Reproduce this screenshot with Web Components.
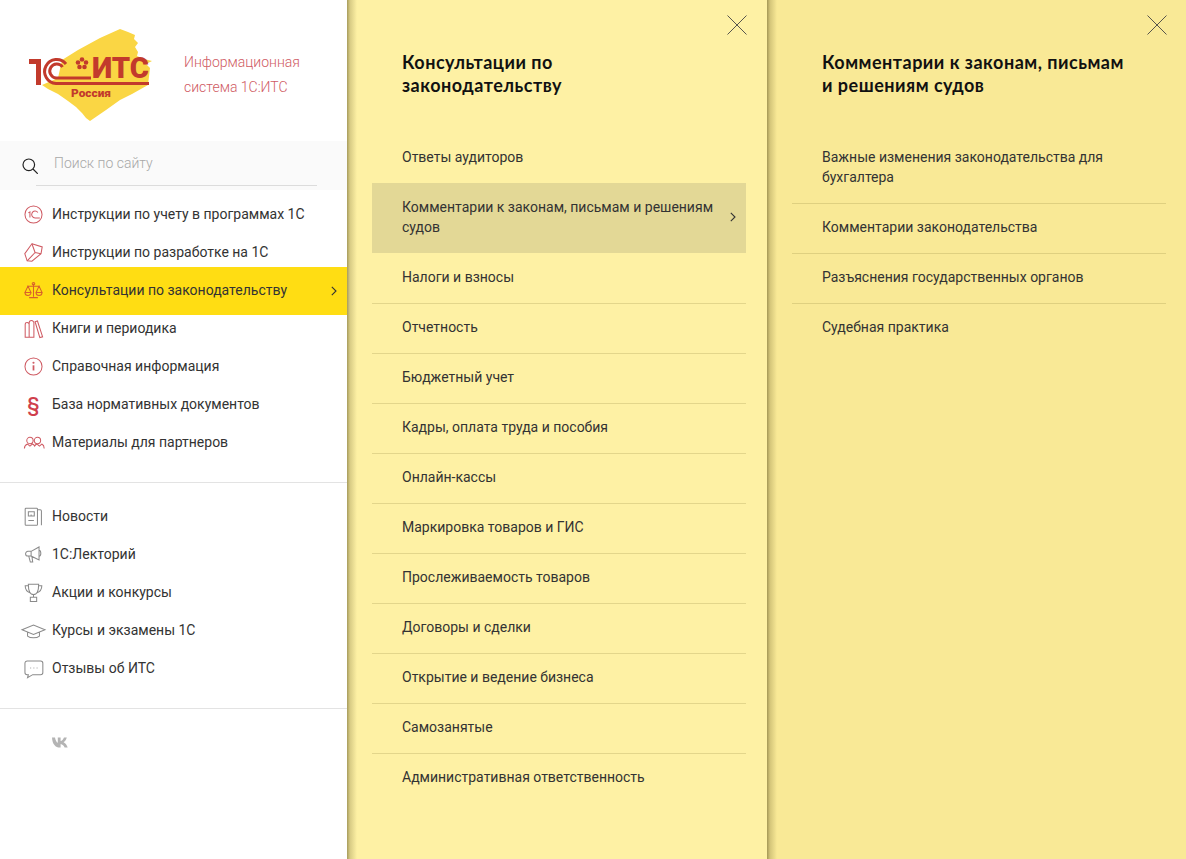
<!DOCTYPE html>
<html lang="ru">
<head>
<meta charset="utf-8">
<title>1С:ИТС</title>
<style>
  html, body { margin: 0; height: 100%; overflow: hidden; background: #fff; }
  body { font-family: Roboto, "Liberation Sans", sans-serif; font-size: 14px; color: #333; }
</style>
</head>
<body>

<its-app>
  <its-sidebar>
    <its-logo slot="logo">Информационная система 1С:ИТС</its-logo>
    <its-search slot="search" placeholder="Поиск по сайту"></its-search>
    <its-nav-group slot="main" tone="red">
      <its-nav-item icon="onec">Инструкции по учету в программах 1С</its-nav-item>
      <its-nav-item icon="cube">Инструкции по разработке на 1С</its-nav-item>
      <its-nav-item icon="scales" active>Консультации по законодательству</its-nav-item>
      <its-nav-item icon="books">Книги и периодика</its-nav-item>
      <its-nav-item icon="info">Справочная информация</its-nav-item>
      <its-nav-item icon="para">База нормативных документов</its-nav-item>
      <its-nav-item icon="people">Материалы для партнеров</its-nav-item>
    </its-nav-group>
    <its-nav-group slot="extra" tone="grey">
      <its-nav-item icon="news">Новости</its-nav-item>
      <its-nav-item icon="horn">1С:Лекторий</its-nav-item>
      <its-nav-item icon="cup">Акции и конкурсы</its-nav-item>
      <its-nav-item icon="cap">Курсы и экзамены 1С</its-nav-item>
      <its-nav-item icon="chat">Отзывы об ИТС</its-nav-item>
    </its-nav-group>
  </its-sidebar>

  <its-panel style="--panel-bg:#fef1a4">
    <h2 slot="heading">Консультации по<br>законодательству</h2>
    <its-link>Ответы аудиторов</its-link>
    <its-link active>Комментарии к законам, письмам и решениям судов</its-link>
    <its-link>Налоги и взносы</its-link>
    <its-link>Отчетность</its-link>
    <its-link>Бюджетный учет</its-link>
    <its-link>Кадры, оплата труда и пособия</its-link>
    <its-link>Онлайн-кассы</its-link>
    <its-link>Маркировка товаров и ГИС</its-link>
    <its-link>Прослеживаемость товаров</its-link>
    <its-link>Договоры и сделки</its-link>
    <its-link>Открытие и ведение бизнеса</its-link>
    <its-link>Самозанятые</its-link>
    <its-link>Административная ответственность</its-link>
  </its-panel>

  <its-panel style="--panel-bg:#f9e996">
    <h2 slot="heading">Комментарии к законам, письмам<br>и решениям судов</h2>
    <its-link>Важные изменения законодательства для бухгалтера</its-link>
    <its-link>Комментарии законодательства</its-link>
    <its-link>Разъяснения государственных органов</its-link>
    <its-link>Судебная практика</its-link>
  </its-panel>
</its-app>

<script>
// line icons for the sidebar, all on a 24x24 box
const ICONS = {
  onec: `<circle cx="12" cy="12" r="10.8"/><path d="M5.5 10l2-1.300v7M17.500 9.500A4.300 4.300 0 1 0 14 16.300H20"/>`,
  cube: `<path d="M10 1l13 4-1.500 8.500L10 23l-6-.5L1 13.500z"/><path d="M14 12L10 1M14 12l7.500 1.500M14 12L4 22.500"/>`,
  scales: `<path d="M12 3.500V20M6.500 21h11M4 6.500h16M5 6.500L1.200 14.500h7.600zM19 6.500l-3.800 8h7.600zM1.200 14.500a3.800 3.800 0 0 0 7.600 0M15.200 14.500a3.800 3.800 0 0 0 7.600 0"/><circle cx="12" cy="3.500" r="1.600"/>`,
  books: `<path d="M1.500 7a2.500 2.500 0 0 1 5 0v16h-5zM6.500 5a3 3 0 0 1 6 0v18h-6zM14 3.500l3-1 6.500 20-3.500 1z"/>`,
  info: `<circle cx="12" cy="12" r="10.800"/><path d="M12 10.500v6.500" stroke-width="2.200"/><circle cx="12" cy="7.300" r=".6" stroke-width="1.500"/>`,
  para: `<text x="12" y="21" text-anchor="middle" font-family="Roboto, sans-serif" font-size="25" font-weight="500" fill="#cf3f4d" stroke="none">§</text>`,
  people: `<path d="M3.500 9.500a4 4 0 0 1 8 0c0 2.200-1.800 4-4 4s-4-1.800-4-4zM13 9.500a4 4 0 0 1 8 0c0 2.200-1.800 4-4 4s-4-1.800-4-4zM.5 19.500c0-3 1.500-4.500 4-5.500l3 2.500 3-2.500c1.500.5 2.500 1.500 3 2.500 .5-1 1.500-2 3-2.500l3 2.500 3-2.500c2 1 3 2.500 3 5.500"/>`,
  news: `<rect x="1.500" y="1.500" width="15.500" height="21.500" rx="1"/><path d="M17 3.500h3.500a1.500 1.500 0 0 1 1.500 1.500V23M5.500 6h7.500v5.500H5.500zM9 11.500V9.500M5.500 17h7"/>`,
  horn: `<path d="M9 8L19 2.500V19L9 14zM9 8H5a3 3 0 0 0 0 6h4M19 6.500c3 .5 3 7.500 0 8M6 14l2 7.500h3L10 14.500"/>`,
  cup: `<path d="M5.500 1.500h13c0 8-1.500 13-6.500 13s-6.500-5-6.500-13zM5.500 3.500H1.500c0 4.500 3 8 6.500 9M18.500 3.500h4c0 4.500-3 8-6.500 9M12 14.500v3.500M8 18h8v5.500H8z"/>`,
  cap: `<path d="M-2.500 11l14.500-6 14.500 6-14.500 6zM4.500 14v5c3.500 3 11.500 3 15 0v-5"/>`,
  chat: `<path d="M4 2.500h17a2.800 2.800 0 0 1 2.800 2.800V17a2.800 2.800 0 0 1-2.800 2.800H11l-6.500 3.700 1-3.700H4A2.800 2.800 0 0 1 1.200 17V5.300A2.800 2.800 0 0 1 4 2.500z"/><path d="M8 11.500h1M12 11.500h1M16 11.500h1"/>`
};

class ItsApp extends HTMLElement {
  constructor() {
    super();
    this.attachShadow({ mode: 'open' }).innerHTML = `
      <style>
        :host { display: flex; height: 859px; overflow: hidden; }
      </style>
      <slot></slot>`;
  }
}

class ItsSidebar extends HTMLElement {
  constructor() {
    super();
    this.attachShadow({ mode: 'open' }).innerHTML = `
      <style>
        :host { display: block; flex: 0 0 347px; box-sizing: border-box; background: #fff; }
        .group-main { display: block; padding: 5px 0 21px; border-bottom: 1px solid #e3e3e3; }
        .group-extra { display: block; padding: 14px 0 21px; border-bottom: 1px solid #e3e3e3; }
        .social { padding: 28px 0 0 52px; height: 20px; display: flex; }
      </style>
      <slot name="logo"></slot>
      <slot name="search"></slot>
      <div class="group-main"><slot name="main"></slot></div>
      <div class="group-extra"><slot name="extra"></slot></div>
      <div class="social">
        <svg width="18" height="11" viewBox="0 0 18 11" fill="#b4b4b4"><path d="M0 .4h3c.3 2.300 1.500 4.800 2.800 5.400V.4h2.800v3.700C9.900 4 11.300 2.300 12 .4h2.800c-.5 2.100-2 4-3.200 4.800 1.400.7 3.300 2.400 4.100 5.400h-3.100c-.6-1.900-2.100-3.500-4-3.700v3.700h-.7C3.600 10.600.3 7 0 .4z"/></svg>
      </div>`;
  }
}

class ItsLogo extends HTMLElement {
  constructor() {
    super();
    this.attachShadow({ mode: 'open' }).innerHTML = `
      <style>
        :host { display: flex; height: 141px; box-sizing: border-box; padding: 28px 0 0 28px; gap: 28px; }
        svg { flex: none; }
        .caption { width: 125px; padding-top: 22px; font-size: 14px; line-height: 25px; color: #cf5b63; font-weight: 300; }
      </style>
      <svg width="128" height="94" viewBox="0 0 128 94">
        <path fill="#fad644" d="M92 1l8 3 7 3-1 4 4 4-3 4 3 5-1 4 7 3 8 2-6 3 4 4-2 17-16 9-12 6-14 10-16 11-4-3-4-5-6-6-8-6-10-7-10-5-6-4 16-7 4-18 16-10 22-12z"/>
        <g fill="none" stroke="#c23a2c">
          <path d="M1 33.500h9.500V57" stroke-width="5"/>
          <path d="M38 36A12 12 0 1 0 28 55.500H121" stroke-width="3"/>
          <path d="M34.500 39A7 7 0 1 0 28 50H63" stroke-width="3"/>
        </g>
        <g fill="#c23a2c">
          <circle cx="54" cy="31.500" r="2.300"/><circle cx="58" cy="34.500" r="2.300"/><circle cx="56.500" cy="39" r="2.300"/><circle cx="51.500" cy="39" r="2.300"/><circle cx="50" cy="34.500" r="2.300"/>
        </g>
        <circle cx="54" cy="35.500" r="1.800" fill="#fad644"/>
        <text x="64" y="50" font-family="Roboto, sans-serif" font-weight="900" font-size="29" fill="#c23a2c" textLength="57" lengthAdjust="spacingAndGlyphs">ИТС</text>
        <text x="43" y="69" font-family="Roboto, sans-serif" font-weight="900" font-size="11" fill="#c23a2c" textLength="40" lengthAdjust="spacingAndGlyphs">Россия</text>
      </svg>
      <div class="caption"><slot></slot></div>`;
  }
}

class ItsSearch extends HTMLElement {
  constructor() {
    super();
    this.attachShadow({ mode: 'open' }).innerHTML = `
      <style>
        :host { display: block; height: 49px; background: #fafafa; box-sizing: border-box; padding-top: 14px; }
        .row { display: flex; align-items: center; gap: 16px; padding-left: 22px; height: 16px; }
        .row svg { margin-top: 6px; }
        .hint { font-size: 14px; font-weight: 300; color: #a8a8a8; }
        .rule { height: 1px; background: #dcdcdc; margin: 14px 30px 0 36px; }
      </style>
      <div class="row">
        <svg width="16" height="16" viewBox="0 0 16 16" fill="none" stroke="#222" stroke-width="1.200"><circle cx="6.800" cy="6.800" r="5.800"/><path d="M11 11l4.800 4.800"/></svg>
        <span class="hint">${this.getAttribute('placeholder') || ''}</span>
      </div>
      <div class="rule"></div>`;
  }
}

class ItsNavGroup extends HTMLElement {
  constructor() {
    super();
    this.attachShadow({ mode: 'open' }).innerHTML = `
      <style>
        :host { display: block; --icon: #cf5b63; }
        :host([tone="grey"]) { --icon: #8a8a8a; }
      </style>
      <slot></slot>`;
  }
}

class ItsNavItem extends HTMLElement {
  constructor() {
    super();
    const icon = ICONS[this.getAttribute('icon')] || '';
    this.attachShadow({ mode: 'open' }).innerHTML = `
      <style>
        :host { display: flex; align-items: center; height: 38px; padding-left: 24px; padding-right: 10px; color: #333; }
        :host([active]) { background: #ffdd13; height: 48px; margin: -4px 0 -6px; padding-bottom: 2px; box-sizing: border-box; --icon: #d8602c; }
        svg.ic { flex: none; width: 19px; height: 19px; margin-right: 9px; fill: none; stroke: var(--icon); stroke-width: 1.300; overflow: visible; }
        .label { flex: 1; white-space: nowrap; }
        .chev { display: none; margin-top: 2px; }
        :host([active]) .chev { display: block; }
      </style>
      <svg class="ic" viewBox="0 0 24 24">${icon}</svg>
      <span class="label"><slot></slot></span>
      <svg class="chev" width="6" height="10" viewBox="0 0 6 10" fill="none" stroke="#333" stroke-width="1.100"><path d="M.8 .8L5 5 .8 9.200"/></svg>`;
  }
}

class ItsPanel extends HTMLElement {
  constructor() {
    super();
    this.attachShadow({ mode: 'open' }).innerHTML = `
      <style>
        :host { display: block; flex: 0 0 420px; box-sizing: border-box; height: 859px; padding: 0 21px 0 25px; position: relative;
          background: linear-gradient(to right, rgba(80, 70, 20, .5), rgba(80, 70, 20, .22) 3px, rgba(80, 70, 20, 0) 10px), var(--panel-bg); }
        :host(:last-child) { flex-basis: 419px; padding-right: 20px; }
        .close { position: absolute; top: 15px; right: 20px; }
        :host(:last-child) .close { right: 19px; }
        header { height: 134px; box-sizing: border-box; padding: 51px 0 0 30px; }
        ::slotted(h2) { margin: 0; font: 700 18px/23px Lato, "Open Sans", sans-serif; color: #111; letter-spacing: .5px; }
      </style>
      <svg class="close" width="20" height="20" viewBox="0 0 20 20" fill="none" stroke="#444" stroke-width=".9"><path d="M.5 .5l19 19M19.500 .5l-19 19"/></svg>
      <header><slot name="heading"></slot></header>
      <slot></slot>`;
  }
}

class ItsLink extends HTMLElement {
  constructor() {
    super();
    this.attachShadow({ mode: 'open' }).innerHTML = `
      <style>
        :host { display: flex; align-items: center; box-sizing: border-box; min-height: 50px; padding: 13px 10px 16px 30px; line-height: 20px; color: #333; border-bottom: 1px solid rgba(120, 110, 40, .2); }
        :host(:last-child) { border-bottom-color: transparent; }
        :host([active]) { background: #e3d896; background-clip: padding-box; border-bottom-color: transparent; box-shadow: 0 -1px 0 #e3d896; }
        .text { flex: 1; }
        .chev { display: none; flex: none; margin-left: 8px; }
        :host([active]) .chev { display: block; }
      </style>
      <span class="text"><slot></slot></span>
      <svg class="chev" width="6" height="10" viewBox="0 0 6 10" fill="none" stroke="#333" stroke-width="1.100"><path d="M.8 .8L5 5 .8 9.200"/></svg>`;
  }
}

customElements.define('its-app', ItsApp);
customElements.define('its-sidebar', ItsSidebar);
customElements.define('its-logo', ItsLogo);
customElements.define('its-search', ItsSearch);
customElements.define('its-nav-group', ItsNavGroup);
customElements.define('its-nav-item', ItsNavItem);
customElements.define('its-panel', ItsPanel);
customElements.define('its-link', ItsLink);
</script>
</body>
</html>
